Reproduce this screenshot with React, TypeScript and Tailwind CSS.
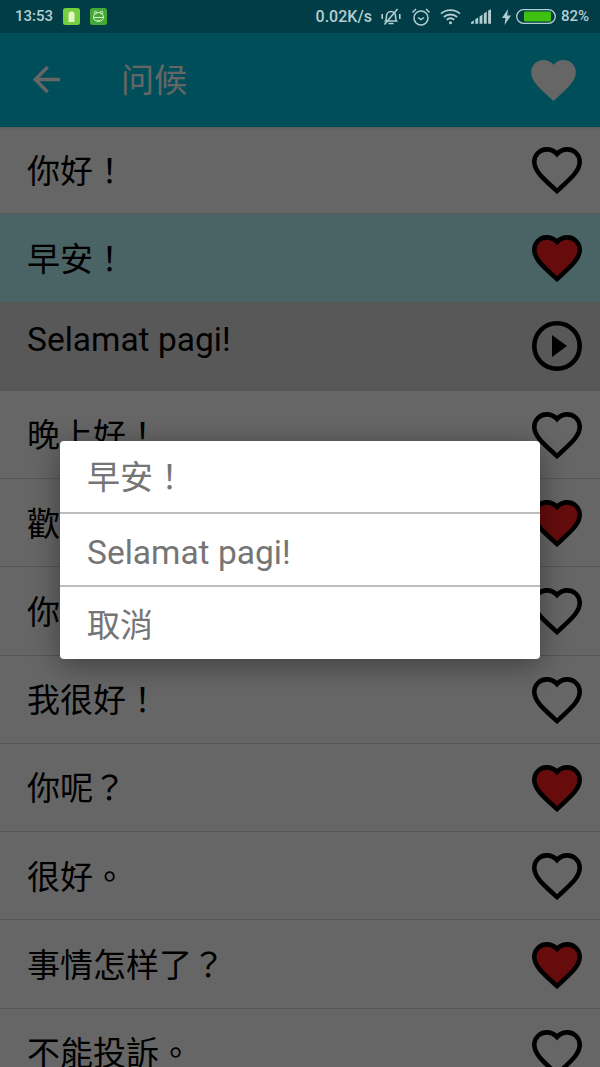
const HEART = "M12 21.35l-1.45-1.32C5.4 15.36 2 12.28 2 8.5 2 5.42 4.42 3 7.5 3c1.74 0 3.41.81 4.5 2.09C13.09 3.81 14.76 3 16.5 3 19.58 3 22 5.42 22 8.5c0 3.78-3.4 6.86-8.55 11.54L12 21.35z";
const FONT = "font-['Roboto','Noto_Sans_CJK_TC',sans-serif]";

type Row = { text: string; icon: "empty" | "full" | "play"; bg?: string };
const rows: Row[] = [
  { text: "你好！", icon: "empty" },
  { text: "早安！", icon: "full", bg: "bg-[#b9fbff]" },
  { text: "Selamat pagi!", icon: "play", bg: "bg-[#dcdcdc]" },
  { text: "晚上好！", icon: "empty" },
  { text: "歡迎！", icon: "full" },
  { text: "你好嗎？", icon: "empty" },
  { text: "我很好！", icon: "empty" },
  { text: "你呢？", icon: "full" },
  { text: "很好。", icon: "empty" },
  { text: "事情怎样了？", icon: "full" },
  { text: "不能投訴。", icon: "empty" },
];

function Heart({ filled }: { filled: boolean }) {
  return (
    <svg viewBox="1 2.1 22 20.4" className="w-[50px] h-[47px] mt-[2px]">
      <path d={HEART} fill={filled ? "#ff2020" : "none"} stroke="#000" strokeWidth="2" />
    </svg>
  );
}

function Play() {
  return (
    <svg viewBox="0 0 50 50" className="w-[50px] h-[50px]">
      <circle cx="25" cy="25" r="22.7" fill="none" stroke="#000" strokeWidth="4.6" />
      <path d="M20 14 L35 25 L20 36 Z" fill="#000" />
    </svg>
  );
}

function AppIcon({ kind }: { kind: "battery" | "robot" }) {
  return (
    <svg viewBox="0 0 17 17" className="w-[17px] h-[17px]">
      <rect x="0" y="0" width="17" height="17" rx="2.500" fill={kind === "battery" ? "#74cf3c" : "#45a93a"} />
      {kind === "battery" ? (
        <path d="M7 3.500h3v1h1.500v9.500h-6V4.500H7z" fill="#e4f6c4" />
      ) : (
        <g fill="none" stroke="#d8f5c8" strokeWidth="1">
          <ellipse cx="8.500" cy="9" rx="5" ry="4.500" />
          <path d="M4 9.500h9M6.500 12c1 .8 3 .8 4 0" />
          <circle cx="5.500" cy="4.500" r="1.200" />
          <circle cx="11.500" cy="4.500" r="1.200" />
        </g>
      )}
    </svg>
  );
}

function StatusIcons() {
  const c = "#b3ced2";
  return (
    <>
      <svg viewBox="0 0 20 20" className="w-[20px] h-[20px]" fill="none" stroke={c} strokeWidth="1.600">
        <path d="M4.500 14c1-1.500 1-3 1-5a4.500 4.500 0 0 1 9 0c0 2 0 3.500 1 5z" />
        <path d="M7.500 16.500h5M3.500 17.500 16.500 2M1.200 7v5M18.800 7v5" />
      </svg>
      <svg viewBox="0 0 20 20" className="w-[20px] h-[20px] ml-[10px]" fill="none" stroke={c} strokeWidth="1.500">
        <circle cx="10" cy="11" r="7" />
        <path d="M7 10.500l3 2 3-2M1.500 5.500 5 2M18.500 5.500 15 2" />
      </svg>
      <svg viewBox="0 0 22 18" className="w-[21px] h-[17px] ml-[9px]" fill="none" stroke={c} strokeWidth="2">
        <path d="M1 6c5.500-5 14.500-5 20 0M4 9.500c4-3.500 10-3.500 14 0M7 12.500c2.300-1.800 5.700-1.800 8 0" />
        <circle cx="11" cy="15.700" r="1.600" fill={c} stroke="none" />
      </svg>
      <svg viewBox="0 0 21 15" className="w-[20px] h-[15px] ml-[10px]" fill={c}>
        <path d="M0 15v-1.500L3 11.500V15zM4.500 15v-4.500l3-2V15zM9 15V7.500l3-2.200V15zM13.500 15V4.300l3-2.100V15zM18 15V1.200L21 0v15z" />
      </svg>
      <svg viewBox="0 0 9 16" className="w-[9px] h-[16px] ml-[11px]" fill={c}>
        <path d="M6 0 0 9h3.500L2.500 16 9 6.500H5.200z" />
      </svg>
      <svg viewBox="0 0 40 15" className="w-[40px] h-[15px] ml-[5px]">
        <rect x="0.700" y="0.700" width="38.600" height="13.600" rx="6.800" fill="none" stroke={c} strokeWidth="1.300" />
        <rect x="8" y="2.500" width="27" height="10" rx="1" fill="#3fc010" />
      </svg>
    </>
  );
}

export default function App() {
  return (
    <div className={`relative w-[600px] h-[1067px] overflow-hidden bg-white ${FONT}`}>
      <div className="flex flex-col h-full">
        <div className="relative z-10 flex items-center shrink-0 h-[33px] pl-[15px] pr-[11px] bg-[#003d46] text-[#b3ced2] text-[15px] font-medium">
          <span>13:53</span>
          <span className="ml-[10px] flex gap-[10px]">
            <AppIcon kind="battery" />
            <AppIcon kind="robot" />
          </span>
          <span className="ml-auto mr-[9px] text-[16px]">0.02K/s</span>
          <span className="flex items-center">
            <StatusIcons />
          </span>
          <span className="ml-[5px]">82%</span>
        </div>
        <div className="relative flex items-center shrink-0 h-[94px] pl-[26px] pr-[24px] bg-[#00c3e0] shadow-sm">
          <svg viewBox="0 0 24 24" className="w-[41px] h-[41px] fill-white -mt-[2px]">
            <path d="M20 11H7.830l5.590-5.590L12 4l-8 8 8 8 1.410-1.410L7.830 13H20v-2z" />
          </svg>
          <span className="ml-[54px] text-[33px] leading-none text-white">问候</span>
          <svg viewBox="2 3 20 18.350" className="ml-auto w-[45px] h-[41px] fill-white">
            <path d={HEART} />
          </svg>
        </div>
        <div className="flex flex-col shrink-0 -mt-[1px]">
          {rows.map((r) => (
            <div
              key={r.text}
              className={`flex items-center justify-between h-[88.280px] shrink-0 pl-[27px] pr-[18px] border-b-[1.500px] border-[#d8d8d8] ${r.bg ?? "bg-white"}`}
            >
              {r.icon === "play" ? (
                <span className="text-[33.500px] leading-none text-black -mt-[13px]">{r.text}</span>
              ) : (
                <span className="text-[33px] leading-none text-black mt-[3px]">{r.text}</span>
              )}
              {r.icon === "play" ? <Play /> : <Heart filled={r.icon === "full"} />}
            </div>
          ))}
        </div>
      </div>

      <div className="absolute inset-0 bg-black/60" />

      <div className="absolute left-[60px] top-[441px] w-[480px] rounded-[4px] bg-white shadow-[0_6px_30px_rgba(0,0,0,0.4)] text-[33px] leading-none text-[#757575]">
        <div className="flex items-center h-[73px] pl-[27px] pt-[2px] border-b-2 border-[#bdbdbd]">早安！</div>
        <div className="flex items-center h-[73px] pl-[27px] pt-[6px] border-b-2 border-[#bdbdbd] text-[33.500px]">Selamat pagi!</div>
        <div className="flex items-center h-[72px] pl-[27px] pt-[4px]">取消</div>
      </div>
    </div>
  );
}
